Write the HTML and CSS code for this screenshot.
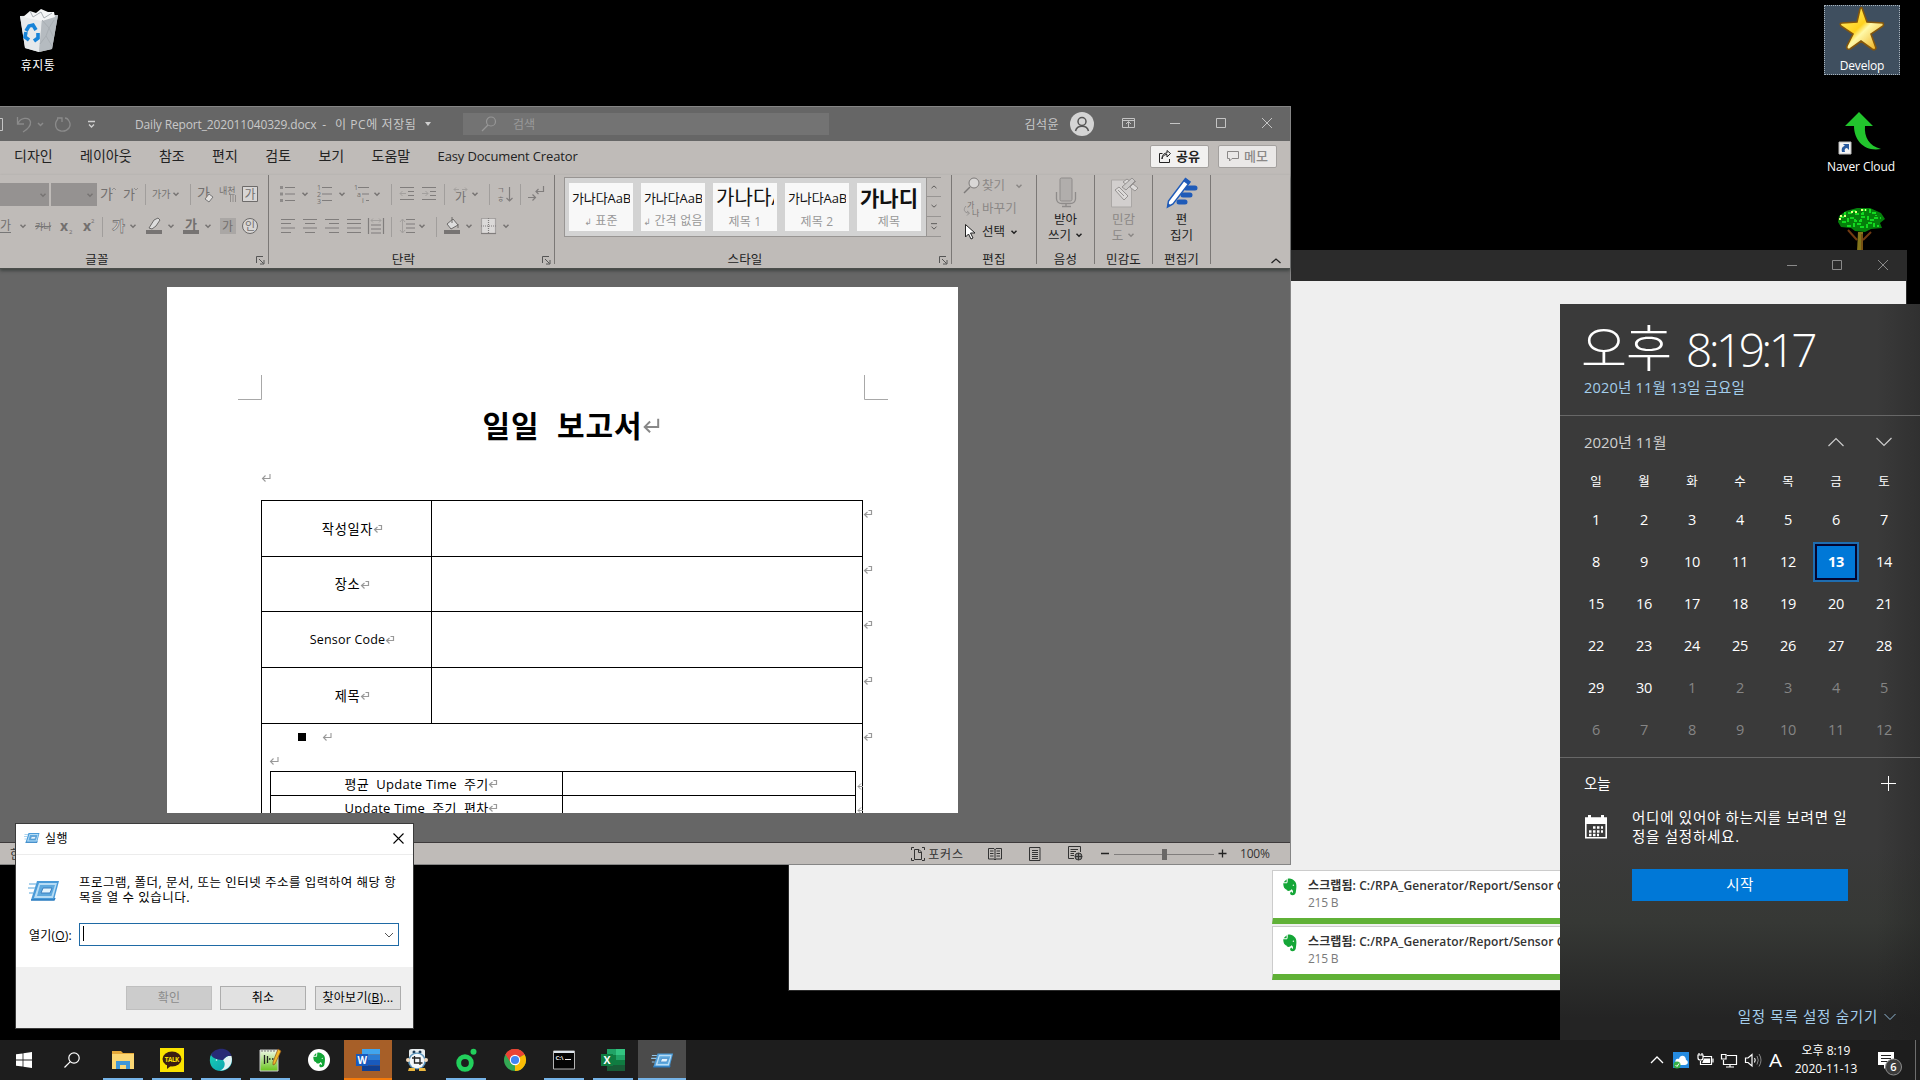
FILE: index.html
```html
<!DOCTYPE html>
<html lang="ko">
<head>
<meta charset="utf-8">
<title>Desktop</title>
<link rel="stylesheet" href="styles.css">
</head>
<body>
<svg class="defs" width="0" height="0">
  <defs>
    <symbol id="chev" viewBox="0 0 8 8"><path d="M1.500 2.800L4 5.200L6.500 2.800" fill="none" stroke="currentColor" stroke-width="1.500"/></symbol>
    <symbol id="launch" viewBox="0 0 9 9"><path d="M.5 7V.5H7M3 3L7.500 7.500M8 4V8H4" fill="none" stroke="currentColor"/></symbol>
    <symbol id="ret" viewBox="0 0 10 10"><path d="M9 1v4.500H2M4.500 2.500L1.500 5.500L4.500 8.500" fill="none" stroke="currentColor" stroke-width="1.100"/></symbol>
    <symbol id="retc" viewBox="0 0 10 10"><path d="M5.500 1.500H8.500V5.500H2M4.500 3L1.500 5.500L4.500 8.500" fill="none" stroke="currentColor" stroke-width="1.200"/></symbol>
    <symbol id="runicon" viewBox="0 0 32 24">
      <path d="M9 2H31L26 21H3Z" fill="#4a9bd8"/><path d="M11 4H29L25 19H6Z" fill="#b6dcf5"/>
      <path d="M12 6H27L23.500 17H9Z" fill="#5ea9de"/><path d="M15 9H24L22 14H13Z" fill="#e4f4fd" stroke="#3a80c0"/>
      <path d="M1 5H8M0 9H7M1 14H5" stroke="#8fc4e8" stroke-width="1.500"/>
      <path d="M3 21H26L27 19" fill="none" stroke="#2b7cc0" stroke-width="1.500"/>
    </symbol>
    <symbol id="elephant" viewBox="0 0 20 24">
      <path d="M7 1C11 0 14 2 16 4C19 6 19 12 18 17C18 21 16 23 13 23C10 23 9 19 12 18L13 20C15 19 14 16 12 15C10 18 6 18 5 15C3 15 1 12 1 7H6C7 6 7 4 7 1Z" fill="#14a637"/>
      <path d="M5.500 1.500V5.500H1.500Z" fill="#14a637"/><circle cx="14.500" cy="9.500" r="1" fill="#e8f7ea"/>
    </symbol>
    <linearGradient id="gold" x1="0" y1="0" x2="1" y2="1"><stop offset="0" stop-color="#fff27a"/><stop offset=".45" stop-color="#ffd21e"/><stop offset=".55" stop-color="#fff9a8"/><stop offset="1" stop-color="#eba000"/></linearGradient>
    <linearGradient id="teal" x1="0" y1="0" x2="1" y2="1"><stop offset="0" stop-color="#19d3b5"/><stop offset="1" stop-color="#0b9bb0"/></linearGradient>
    <linearGradient id="leaf" x1="0" y1="0" x2="0" y2="1"><stop offset="0" stop-color="#f2f9e8"/><stop offset="1" stop-color="#68c41c"/></linearGradient>
  </defs>
</svg>

<div class="desktop">
  <div class="shortcut trash">
    <svg width="44" height="46" viewBox="0 0 44 46">
      <path d="M4 8L42 7L36 41L23 44L9 40Z" fill="#cdd2d6"/><path d="M4 8L26 11L23 44L9 40Z" fill="#e6e9eb"/><path d="M26 11L42 7L36 41L23 44Z" fill="#b5bbc0"/>
      <path d="M7 9L14 3L20 5L25 1L32 4L38 4L39 9L26 13Z" fill="#f4f5f6"/><path d="M14 3L17 9L25 4L28 10L36 5M26 12L33 20L30 28L36 38M38 12L33 20L37 28M24 36L30 28" fill="none" stroke="#a8aeb3"/>
      <path d="M10 23L13 18L17 17L20 22M22 25L22 30L18 33M13 32L9 29L10 24" fill="none" stroke="#1683d8" stroke-width="3.600"/>
    </svg>
    <span>휴지통</span>
  </div>
  <div class="shortcut develop">
    <svg width="48" height="46" viewBox="0 0 48 46"><path d="M24 2L29 16L45 17Q46 19 45 20L33 28L38 42Q37 45 34 43L23 35L12 43Q8 44 9 40L15 28L3 20Q1 17 4 17L19 16L22 3Q23 1 24 2Z" fill="url(#gold)" stroke="#84560c" stroke-width="1.600"/></svg>
    <span>Develop</span>
  </div>
  <div class="shortcut naver">
    <svg width="48" height="46" viewBox="0 0 48 46"><path d="M24 1L38 15H30C29 26 34 35 46 38C30 41 19 30 19 15H10Z" fill="#22c52d"/><path d="M4 31H16V43H4Z" fill="#f4f4f4" stroke="#bbb"/><path d="M7 41C6 37 8 35 10 35L8 33H14V39L12 37C10 37 9 39 10 41Z" fill="#295a9e"/></svg>
    <span>Naver Cloud</span>
  </div>
  <div class="shortcut tree">
    <svg width="48" height="44" viewBox="0 0 48 44">
      <path d="M11 22L20 32M34 24L26 32" stroke="#713a12" stroke-width="2"/><path d="M21 24H26V44H20Z" fill="#84751a"/><path d="M25 26V44" stroke="#6b2f0c"/>
      <path d="M9 3L20 0H33L44 5L48 11L43 15L45 20L34 21L28 24L18 23L14 20L4 19L1 14L2 8Z" fill="#057f0b"/>
      <path d="M3 9H8V5H14V3H19V6H26V2H33V5H39V8M5 14H11V10H18V13H24V9H31V12H38V10H44M10 18H17V16H24V19H30V15H37V18H42" fill="none" stroke="#13da20" stroke-width="2" stroke-dasharray="4 2"/>
      <path d="M3 12V8H9M14 4H20M24 2H29" fill="none" stroke="#e4ff83" stroke-width="2" stroke-dasharray="2 2"/>
    </svg>
  </div>

  <section class="backwin">
    <header><svg width="140" height="30" viewBox="1766 250 140 30"><g fill="none" stroke="#8a8a8a"><path d="M1787 265.500H1797M1832.500 260.500H1841.500V269.500H1832.500ZM1878 260L1888 270M1888 260L1878 270"/></g></svg></header>
    <div class="toasts">
      <div class="toast"><svg width="16" height="18"><use href="#elephant"/></svg><div><b>스크랩됨: C:/RPA_Generator/Report/Sensor Code</b><span>215 B</span></div></div>
      <div class="toast"><svg width="16" height="18"><use href="#elephant"/></svg><div><b>스크랩됨: C:/RPA_Generator/Report/Sensor Code</b><span>215 B</span></div></div>
    </div>
  </section>

  <section class="word">
    <header class="titlebar">
      <svg width="135" height="34" viewBox="0 107 135 34" fill="none">
        <path d="M0 118.500H2.500V130.500H0" stroke="#c4c4c4"/>
        <g stroke="#8b8b8b" stroke-width="1.300"><path d="M17.500 117V124H24M18 123.500C20 118 29 116 30.500 122C31 126 28 129 23 132"/><path d="M58 119C54 123 55 130 61 131C68 132 72 126 69 121C68 119 66 118 65 118M57 118H62V122"/></g>
        <path d="M38 123L40.500 125.500L43 123" stroke="#8b8b8b" stroke-width="1.500"/><path d="M88 121.500H95M89 124.500L91.500 127L94 124.500" stroke="#d0d0d0" stroke-width="1.300"/>
      </svg>
      <span class="docname">Daily Report_202011040329.docx&nbsp; -&nbsp; <span>이 PC에 저장됨</span></span>
      <svg class="tri" width="6" height="4"><path d="M0 0H6L3 4Z" fill="#d0d0d0"/></svg>
      <div class="search"><svg width="16" height="16" viewBox="0 0 16 16" fill="none" stroke="#979797" stroke-width="1.200"><circle cx="10" cy="5.500" r="4.500"/><path d="M7 9L1 15"/></svg><span>검색</span></div>
      <div class="account"><span>김석윤</span>
        <svg width="24" height="24" viewBox="0 0 24 24"><circle cx="12" cy="12" r="12" fill="#d4d4d4"/><g fill="none" stroke="#555" stroke-width="1.500"><circle cx="12" cy="9.500" r="4"/><path d="M5.500 19C7 12.500 17 12.500 18.500 19"/></g></svg>
      </div>
      <svg width="180" height="34" viewBox="1110 107 180 34"><g fill="none" stroke="#c4c4c4"><path d="M1122.500 118.500H1134.500V127.500H1122.500ZM1123 120.500H1134M1128.500 127V122M1126 124L1128.500 121.500L1131 124M1170 123.500H1180M1216.500 118.500H1225.500V127.500H1216.500ZM1262 118L1272 128M1272 118L1262 128"/></g></svg>
    </header>
    <nav class="tabs">
      <span>디자인</span><span>레이아웃</span><span>참조</span><span>편지</span><span>검토</span><span>보기</span><span>도움말</span><span class="edc">Easy Document Creator</span>
      <div class="tabbtns">
        <div class="tbtn share"><svg width="12" height="13" viewBox="0 0 12 13" fill="none" stroke="#222"><path d="M3.500 3.500H.5V12.500H10.500V9M3 9C3.500 6 5 4.500 8 4.500V7L11.500 3.500L8 .5V3C5 3 3 5 3 9Z"/></svg>공유</div>
        <div class="tbtn memo"><svg width="12" height="12" viewBox="0 0 12 12" fill="none" stroke="#8b8887"><path d="M.5 1.500H11.500V8.500H5L2.500 11V8.500H.5Z"/></svg>메모</div>
      </div>
    </nav>
    <div class="ribbon">
      <div class="grp g-font">
        <svg class="tools" width="268" height="72" viewBox="0 175 268 72">
          <g fill="#959291"><path d="M0 183H49V206H0ZM51 183H97V206H51Z"/></g>
          <g stroke="#a19e9c"><path d="M145.500 184V205M190.500 184V205M102.500 217V237"/></g>
          <g class="gl"><text x="100" y="199" font-size="14">가</text><text x="123" y="199" font-size="13">가</text><text x="152" y="198" font-size="10">가가</text><text x="197" y="198" font-size="14">가</text><text x="219" y="194" font-size="9">내천</text></g>
          <g fill="none" stroke="#918e8c"><path d="M112 190L114 188L116 190M134 188L136 190L138 188M230.500 195V202M233 195V202M235.500 195V202"/></g>
          <path d="M205 199L209 194L213 197L209 202Z" fill="#e3e1e0" stroke="#777"/>
          <path d="M242.500 186.500H257.500V201.500H242.500Z" fill="#d8d6d5" stroke="#6c6a69"/><text class="gl" x="244.500" y="198.500" font-size="12">가</text>
          <g class="gl"><text x="0" y="230" font-size="12">가</text><text x="35" y="230" font-size="9">캬나</text><text x="60" y="231" font-size="14" font-weight="700">x</text><text x="69" y="234" font-size="6">2</text><text x="83" y="231" font-size="14" font-weight="700">x</text><text x="91" y="223" font-size="6">2</text></g>
          <path d="M0 232.500H11M35 226.500H51" stroke="#777"/>
          <text x="112" y="231" font-size="14" font-weight="700" fill="#e6e4e3" stroke="#7c7a79" stroke-width=".8">가</text>
          <path d="M149 228L154 220L158 218L160 220L156 226L152 229Z" fill="#ddd" stroke="#6c6a69"/><path d="M146 230H162V234H146ZM183 230H199V234H183Z" fill="#777473"/>
          <text class="gl" x="185" y="229" font-size="13" font-weight="700">가</text>
          <path d="M220 218H236V234H220Z" fill="#aaa7a5"/><text class="gl" x="222" y="230.500" font-size="12">가</text>
          <circle cx="250" cy="226" r="7.500" fill="#d8d6d5" stroke="#6c6a69"/><text class="gl" x="245" y="230" font-size="11">인</text>
          <g color="#777473"><use href="#chev" x="39" y="191" width="8" height="8"/><use href="#chev" x="86" y="191" width="8" height="8"/><use href="#chev" x="172" y="190" width="8" height="8"/><use href="#chev" x="19" y="222" width="8" height="8"/><use href="#chev" x="129" y="222" width="8" height="8"/><use href="#chev" x="167" y="222" width="8" height="8"/><use href="#chev" x="204" y="222" width="8" height="8"/></g>
        </svg>
        <div class="cap"><span>글꼴</span><svg width="9" height="9"><use href="#launch"/></svg></div>
      </div>
      <div class="grp g-para">
        <svg class="tools" width="285" height="72" viewBox="269 175 285 72">
          <g stroke="#a19e9c"><path d="M391.500 184V205M444.500 184V205M489.500 184V205M520.500 184V205M391.500 217V237M436.500 217V237"/></g>
          <g fill="none" stroke="#807d7c" stroke-width="1.200">
            <path d="M285 187.500H295M285 194H295M285 200.500H295M322 187.500H332M322 194H332M322 200.500H332M358 187.500H369M362 194H369M366 200.500H369"/>
            <path d="M400 187.500H414M408 191.500H414M408 195.500H414M400 199.500H414M422 187.500H436M430 191.500H436M430 195.500H436M422 199.500H436"/>
            <path d="M281 219.500H295M281 223.500H291M281 228H295M281 232.500H291M303 219.500H317M305 223.500H315M303 228H317M305 232.500H315M325 219.500H339M329 223.500H339M325 228H339M329 232.500H339M347 219.500H361M347 223.500H361M347 228H361M347 232.500H361"/>
            <path d="M368.500 218V234M383.500 218V234M371 225H381M371 229H381M371 233H381M406 219.500H415M406 224H415M406 228H415M406 232.500H415"/>
            <path d="M509.500 187V201M506.500 198L509.500 201L512.500 198M543.500 186V191.500H536M538.500 189L536 191.500L538.500 194M528 197.500H535M532.500 194.500L535.500 197.500L532.500 200.500"/>
            <path d="M481.500 218.500H495.500V233.500H481.500Z" fill="#dbd9d8" stroke-dasharray="1 1"/><path d="M488.500 218V233M481 226H496" stroke-dasharray="1 1"/><path d="M481 233.500H496"/>
          </g>
          <g fill="none" stroke="#a3a09e"><path d="M406 193.500H400M402.500 191L400 193.500L402.500 196M422 193.500H428M425.500 191L428 193.500L425.500 196M371 220.500H381M373 218.500L371 220.500L373 222.500M379 218.500L381 220.500L379 222.500M402.500 219V233M400 222L402.500 219L405 222M400 230L402.500 233L405 230M454 189.500H459M456 187.500L454 189.500L456 191.500M462 189.500H467M465 187.500L467 189.500L465 191.500"/></g>
          <g fill="#8e8b8a"><path d="M280 186H283V189H280ZM280 192.500H283V195.500H280ZM280 199H283V202H280Z"/></g>
          <g class="gl" font-size="7"><text x="317" y="190">1</text><text x="317" y="197">2</text><text x="317" y="204">3</text><text x="354" y="190">1</text><text x="357" y="197">a</text><text x="362" y="203">i</text></g>
          <g class="gl"><text x="455" y="202" font-size="12">가</text><text x="497" y="193" font-size="8">ㄱ</text><text x="497" y="202" font-size="8">ㅎ</text></g>
          <path d="M447 224L453 219L458 225L451 229Z" fill="#ddd" stroke="#6c6a69"/><path d="M452 223V217M458 224V228" stroke="#6c6a69"/><path d="M444 230H460V234H444Z" fill="#777473"/>
          <g color="#777473"><use href="#chev" x="301" y="190" width="8" height="8"/><use href="#chev" x="338" y="190" width="8" height="8"/><use href="#chev" x="373" y="190" width="8" height="8"/><use href="#chev" x="471" y="190" width="8" height="8"/><use href="#chev" x="418" y="222" width="8" height="8"/><use href="#chev" x="465" y="222" width="8" height="8"/><use href="#chev" x="502" y="222" width="8" height="8"/></g>
        </svg>
        <div class="cap"><span>단락</span><svg width="9" height="9"><use href="#launch"/></svg></div>
      </div>
      <div class="grp g-style">
        <div class="gallery">
          <div class="sty"><p>가나다AaB</p><span><i>↲</i> 표준</span></div>
          <div class="sty"><p>가나다AaB</p><span><i>↲</i> 간격 없음</span></div>
          <div class="sty h1"><p>가나다A</p><span>제목 1</span></div>
          <div class="sty"><p>가나다AaB</p><span>제목 2</span></div>
          <div class="sty ttl"><p>가나디</p><span>제목</span></div>
          <div class="gscroll"><svg viewBox="0 0 8 8" width="8" height="8"><path d="M1.500 5L4 2.800L6.500 5" fill="none" stroke="#5e5c5b"/></svg><svg width="8" height="8" viewBox="0 0 8 8"><path d="M1.500 2.800L4 5L6.500 2.800" fill="none" stroke="#5e5c5b"/></svg><svg width="8" height="8" viewBox="0 0 8 8"><path d="M1 1H7M1.500 4L4 6.500L6.500 4" fill="none" stroke="#5e5c5b"/></svg></div>
        </div>
        <div class="cap"><span>스타일</span><svg width="9" height="9"><use href="#launch"/></svg></div>
      </div>
      <div class="grp g-edit">
        <div class="editrows">
          <div class="dim"><svg width="17" height="17" viewBox="0 0 17 17"><circle cx="11" cy="6" r="5" fill="#d9d7d6" stroke="#7d7a79"/><path d="M7 10L1 16" stroke="#7d7a79" stroke-width="1.500"/></svg>찾기<svg class="c far" width="8" height="8"><use href="#chev"/></svg></div>
          <div class="dim"><svg width="17" height="17" viewBox="0 0 17 17"><text class="gl" x="4" y="8" font-size="8">가</text><text class="gl" x="9" y="16" font-size="8">나</text><path d="M3 6C0 9 1 13 6 13M4 11L6.500 13L4 15.500" fill="none" stroke="#969392"/></svg>바꾸기</div>
          <div><svg width="17" height="17" viewBox="0 0 17 17"><path d="M2.500 1.500V14L5.500 11L8 16L10 15L7.500 10H12Z" fill="#fff" stroke="#222"/></svg>선택<svg class="c" width="8" height="8"><use href="#chev"/></svg></div>
        </div>
        <div class="cap"><span>편집</span></div>
      </div>
      <div class="grp g-big g-voice">
        <svg width="22" height="32" viewBox="0 0 22 32"><rect x="5" y="1" width="12" height="23" rx="1.500" fill="#b1aeac" stroke="#8e8b8a"/><path d="M1.500 15V22Q2 26.500 7 26.500H15Q20 26.500 20.500 22V15M11 27V30M7 29.500H16" fill="none" stroke="#8e8b8a" stroke-width="1.300"/></svg>
        <p>받아<br>쓰기<svg width="8" height="8"><use href="#chev"/></svg></p>
        <div class="cap"><span>음성</span></div>
      </div>
      <div class="grp g-big g-sens dim">
        <svg width="28" height="32" viewBox="0 0 28 32"><path d="M1.500 3H21.500V30H1.500Z" fill="#d2cfce" stroke="#aaa7a5"/><path d="M5 13L9 10L18 19L14 23ZM8 13L14 19M13 5L17 2L28 11L25 14Z" fill="#dcdad9" stroke="#969392"/><path d="M12 10L22 1L25 4L16 13ZM20 10L26 4" fill="#cbc9c8" stroke="#969392"/></svg>
        <p>민감<br>도<svg width="8" height="8"><use href="#chev"/></svg></p>
        <div class="cap"><span>민감도</span></div>
      </div>
      <div class="grp g-big g-pen">
        <svg width="32" height="32" viewBox="0 0 32 32"><path d="M20 11H29M17 18H24M13 25H19" stroke="#1f5bb8" stroke-width="5" stroke-linecap="round"/><path d="M19.500 1.500L24 5L7 27L1.500 30L2.500 24Z" fill="#fff" stroke="#1f5bb8" stroke-width="1.500"/><path d="M19.500 1L24.500 5L22.500 8L17 4ZM2 26L5 28.500L1 30Z" fill="#1f5bb8"/></svg>
        <p>편<br>집기</p>
        <div class="cap"><span>편집기</span></div>
      </div>
      <svg class="collapse" width="10" height="6" viewBox="0 0 10 6"><path d="M.5 5L5 1L9.500 5" fill="none" stroke="#222" stroke-width="1.300"/></svg>
    </div>
    <div class="canvas">
      <article class="page">
        <div class="corners"><svg width="24" height="25"><path d="M0 24.500H23.500V0" fill="none" stroke="#a8a8a8"/></svg><svg width="24" height="25"><path d="M.5 0V24.500H24" fill="none" stroke="#a8a8a8"/></svg></div>
        <h1>일일&nbsp; 보고서<svg width="18" height="18"><use href="#ret"/></svg></h1>
        <div class="para"><svg width="10" height="10"><use href="#ret"/></svg></div>
        <div class="form">
          <div class="row"><div class="k">작성일자<svg width="10" height="10"><use href="#retc"/></svg></div><div class="v"></div><svg class="end" width="10" height="10"><use href="#retc"/></svg></div>
          <div class="row r2"><div class="k">장소<svg width="10" height="10"><use href="#retc"/></svg></div><div class="v"></div><svg class="end" width="10" height="10"><use href="#retc"/></svg></div>
          <div class="row"><div class="k latin">Sensor Code<svg width="10" height="10"><use href="#retc"/></svg></div><div class="v"></div><svg class="end" width="10" height="10"><use href="#retc"/></svg></div>
          <div class="row"><div class="k">제목<svg width="10" height="10"><use href="#retc"/></svg></div><div class="v"></div><svg class="end" width="10" height="10"><use href="#retc"/></svg></div>
          <div class="rest">
            <svg class="end" width="10" height="10"><use href="#retc"/></svg>
            <div class="bullet"><i></i><svg width="10" height="10"><use href="#ret"/></svg></div>
            <div class="blank"><svg width="10" height="10"><use href="#ret"/></svg></div>
            <div class="inner">
              <div class="irow"><div>평균&nbsp; Update Time&nbsp; 주기<svg width="10" height="10"><use href="#retc"/></svg></div><div></div><svg class="iend" width="6" height="10" viewBox="0 0 6 10"><path d="M1 5.500H6M4 2.500L1 5.500L4 8.500" fill="none" stroke="#999"/></svg></div>
              <div class="irow"><div>Update Time&nbsp; 주기&nbsp; 편차<svg width="10" height="10"><use href="#retc"/></svg></div><div></div><svg class="iend" width="6" height="10" viewBox="0 0 6 10"><path d="M1 5.500H6M4 2.500L1 5.500L4 8.500" fill="none" stroke="#999"/></svg></div>
            </div>
          </div>
        </div>
      </article>
    </div>
    <footer class="status">
      <span class="lang">한국어</span>
      <div class="views">
        <svg width="14" height="14" viewBox="0 0 14 14" fill="none" stroke="#333"><path d="M3 .5H.5V3M.5 11V13.500H3M11 13.500H13.500V11M11 .5H13.500V3M3.500 2.500H8L10.500 5V12.500H3.500ZM7.500 3V5.500H10"/></svg><span class="focus">포커스</span>
        <svg class="v1" width="14" height="14" viewBox="0 0 14 14" fill="none" stroke="#333"><path d="M.5 1.500H6L7 2.500L8 1.500H13.500V12H8L7 13L6 12H.5ZM7 2V13M2 4H5.500M2 6.500H5.500M2 9H5.500M8.500 4H12M8.500 6.500H12M8.500 9H12"/></svg>
        <svg class="v2" width="12" height="14" viewBox="0 0 12 14" fill="none" stroke="#333"><path d="M.5 .5H11V13.500H.5ZM3 3.500H9M3 5.500H9M3 7.500H9M3 9.500H9M3 11.500H9"/></svg>
        <svg class="v3" width="15" height="15" viewBox="0 0 15 15" fill="none" stroke="#333"><path d="M6 12.500H.5V.5H12.500V6M2.500 3.500H10M2.500 5.500H8M2.500 7.500H6M2.500 9.500H6"/><circle cx="10.500" cy="10.500" r="3.500" fill="#888"/><path d="M7 10.500H14M10.500 7V14"/></svg>
        <svg class="zoom" width="128" height="20" viewBox="1100 843 128 20"><path d="M1101 852.500H1109M1218.500 852.500H1226.500M1222.500 848.500V856.500" stroke="#222" stroke-width="1.300"/><path d="M1114 853.500H1214" stroke="#807d7c"/><path d="M1162 848H1167V859H1162Z" fill="#6a6867"/></svg>
        <span class="pct">100%</span>
      </div>
    </footer>
  </section>

  <section class="run">
    <header><svg width="16" height="12"><use href="#runicon"/></svg><span>실행</span><svg class="x" width="11" height="11" viewBox="0 0 11 11"><path d="M.5 .5L10.500 10.500M10.500 .5L.5 10.500" stroke="#000" stroke-width="1.100"/></svg></header>
    <div class="runbody">
      <div class="msg"><svg width="32" height="24"><use href="#runicon"/></svg><p>프로그램, 폴더, 문서, 또는 인터넷 주소를 입력하여 해당 항<br>목을 열 수 있습니다.</p></div>
      <div class="open"><label>열기(<u>O</u>):</label><div class="combo"><i></i><svg width="10" height="6" viewBox="0 0 10 6"><path d="M1 1L5 5L9 1" fill="none" stroke="#555"/></svg></div></div>
    </div>
    <footer><div class="btn off">확인</div><div class="btn">취소</div><div class="btn last">찾아보기(<u>B</u>)...</div></footer>
  </section>

  <aside class="clockpanel">
    <div class="top"><div class="time">오후<span>8:19:17</span></div><div class="date">2020년 11월 13일 금요일</div></div>
    <div class="cal">
      <div class="month"><span>2020년 11월</span><svg width="64" height="12" viewBox="0 0 64 12" fill="none" stroke="#ccc" stroke-width="1.200"><path d="M.5 10L8 2.500L15.500 10M48.500 2L56 9.500L63.500 2"/></svg></div>
      <div class="wk"><span>일</span><span>월</span><span>화</span><span>수</span><span>목</span><span>금</span><span>토</span></div>
      <div class="days">
        <span>1</span><span>2</span><span>3</span><span>4</span><span>5</span><span>6</span><span>7</span>
        <span>8</span><span>9</span><span>10</span><span>11</span><span>12</span><span class="today"><b>13</b></span><span>14</span>
        <span>15</span><span>16</span><span>17</span><span>18</span><span>19</span><span>20</span><span>21</span>
        <span>22</span><span>23</span><span>24</span><span>25</span><span>26</span><span>27</span><span>28</span>
        <span>29</span><span>30</span><span class="o">1</span><span class="o">2</span><span class="o">3</span><span class="o">4</span><span class="o">5</span>
        <span class="o">6</span><span class="o">7</span><span class="o">8</span><span class="o">9</span><span class="o">10</span><span class="o">11</span><span class="o">12</span>
      </div>
    </div>
    <div class="agenda">
      <div class="ah"><span>오늘</span><svg width="15" height="15"><path d="M0 7.500H15M7.500 0V15" stroke="#fff"/></svg></div>
      <div class="ab"><svg width="22" height="25" viewBox="0 0 22 25"><path d="M.8 4H21.200V23.800H.8Z" fill="none" stroke="#fff" stroke-width="1.600"/><path d="M1 4H21V10H1ZM3 1H6V5H3ZM16 1H19V5H16Z" fill="#fff"/><path d="M8 13.500H18M4 17.500H18M4 21H14" stroke="#fff" stroke-width="2.500" stroke-dasharray="2.500 1.500"/></svg><p>어디에 있어야 하는지를 보려면 일<br>정을 설정하세요.</p></div>
      <div class="startbtn">시작</div>
      <div class="hide">일정 목록 설정 숨기기<svg width="12" height="8" viewBox="0 0 12 8"><path d="M.5 1L6 6.500L11.500 1" fill="none" stroke="#8fb6d2"/></svg></div>
    </div>
  </aside>

  <div class="taskbar">
    <div class="ti"><svg width="16" height="16" viewBox="0 0 16 16"><path d="M0 2.300L6.600 1.400V7.600H0ZM7.400 1.300L16 0V7.600H7.400ZM0 8.400H6.600V14.600L0 13.700ZM7.400 8.400H16V16L7.400 14.700Z" fill="#fff"/></svg></div>
    <div class="ti find"><svg width="16" height="16" viewBox="0 0 16 16" fill="none" stroke="#fff" stroke-width="1.200"><circle cx="10" cy="6" r="5.200"/><path d="M6.300 9.700L.5 15.500"/></svg></div>
    <div class="ti on exp"><svg width="22" height="18" viewBox="0 0 22 18"><path d="M0 0H9L11 2H22V18H0Z" fill="#e5a93a"/><path d="M0 3H22V18H0Z" fill="#fbd774"/><path d="M4 18V10H18V18H14V14H8V18Z" fill="#3f97d8"/></svg></div>
    <div class="ti on"><svg width="24" height="24" viewBox="0 0 24 24"><path d="M0 0H24V24H0Z" fill="#fbe300"/><ellipse cx="12" cy="11" rx="9.500" ry="7.500" fill="#3a1d12"/><path d="M7 16L7 21L12 17Z" fill="#3a1d12"/><text x="4.800" y="13.500" font-size="6.300" font-weight="700" fill="#fbe300" textLength="14.500">TALK</text></svg></div>
    <div class="ti on"><svg width="24" height="24" viewBox="0 0 24 24"><path d="M1 10C2 4 7 2 12 5L23 10C24 18 18 23 12 23C4 23 0 17 1 10Z" fill="url(#teal)"/><path d="M11 22.500C16 21 17 15 14 12C16 9 20 7 22.500 8C24.500 16 19 23 11 22.500Z" fill="#e3f2f3"/><path d="M2 7C4 2 10 0 15 1C19 2 22 5 22.500 8C20 7 17 8 14 12C10 12 4 11 2 7Z" fill="#282a76"/><circle cx="7.500" cy="12" r=".8" fill="#fff"/></svg></div>
    <div class="ti on"><svg width="24" height="24" viewBox="0 0 24 24"><path d="M2 2H20V23H2Z" fill="url(#leaf)" stroke="#c9c9c9"/><path d="M4 1V4M7 1V4M10 1V4M13 1V4M16 1V4" stroke="#777"/><path d="M6.500 7V16M9.500 8V15M11 11H12.500M14 11H15.500" stroke="#222" stroke-width="1.300"/><path d="M20 1L23 3L17 16L15 17V14Z" fill="#f0b92b" stroke="#8d5018" stroke-width=".7"/></svg></div>
    <div class="ti"><svg width="24" height="24" viewBox="0 0 24 24"><circle cx="12" cy="12" r="11" fill="#fff"/><use href="#elephant" x="5.500" y="4" width="13.500" height="16"/></svg></div>
    <div class="ti wordon"><svg width="24" height="22" viewBox="0 0 24 22"><path d="M6 0H24V5.500H6Z" fill="#41a5ee"/><path d="M6 5.500H24V11H6Z" fill="#2b7cd3"/><path d="M6 11H24V16.500H6Z" fill="#185abd"/><path d="M6 16.500H24V22H6Z" fill="#103f91"/><path d="M0 5H12V17H0Z" fill="#185abd"/><text x="1.500" y="14.500" font-size="10" font-weight="700" fill="#fff" textLength="9.500" lengthAdjust="spacingAndGlyphs">W</text></svg></div>
    <div class="ti"><svg width="22" height="24" viewBox="0 0 22 24"><path d="M3 3Q3 1 6 1H16Q19 1 19 3V11H3Z" fill="#e9eef0"/><circle cx="8" cy="4" r="1.500" fill="#1c3b57"/><circle cx="14" cy="4" r="1.500" fill="#1c3b57"/><ellipse cx="11" cy="13" rx="9" ry="8.500" fill="#5d96bd"/><circle cx="11" cy="13" r="7.300" fill="#f5f8fa"/><circle cx="2" cy="12" r="2" fill="#f1d9bc"/><circle cx="20" cy="12" r="2" fill="#f1d9bc"/><path d="M6 10H14V17M8.500 8V15H16.500" fill="none" stroke="#222" stroke-width="1.300"/><path d="M3 20H9V23H2ZM13 20H19L20 23H13Z" fill="#edb83f"/></svg></div>
    <div class="ti on"><svg width="24" height="24" viewBox="0 0 24 24"><circle cx="11" cy="15" r="6.300" fill="none" stroke="#22cf5c" stroke-width="4.800"/><circle cx="19.500" cy="3.800" r="3" fill="#22cf5c"/></svg></div>
    <div class="ti"><svg width="24" height="24" viewBox="0 0 24 24"><circle cx="12" cy="12" r="11" fill="#34a853"/><path d="M12 12L2.470 6.500A11 11 0 0 1 21.530 6.500Z" fill="#ea4335"/><path d="M12 12L21.530 6.500A11 11 0 0 1 12 23Z" fill="#fbbc05"/><path d="M2.470 6.500L8 15L12 12V7H21.800A11 11 0 0 0 2.470 6.500Z" fill="#ea4335"/><circle cx="12" cy="12" r="5.200" fill="#fff"/><circle cx="12" cy="12" r="4.100" fill="#4285f4"/></svg></div>
    <div class="ti on"><svg width="22" height="20" viewBox="0 0 22 20"><path d="M.5 1H21.500V19H.5Z" fill="#050505" stroke="#b5b5b5"/><path d="M1 1H21V3H1Z" fill="#dde5ec"/><text x="2.500" y="9.500" font-size="6" font-weight="700" fill="#eee">C:\</text><path d="M12 9.500H18" stroke="#eee"/></svg></div>
    <div class="ti on"><svg width="24" height="22" viewBox="0 0 24 22"><path d="M6 0H15V6H6Z" fill="#21a366"/><path d="M15 0H24V6H15Z" fill="#33c481"/><path d="M6 6H15V16H6Z" fill="#107c41"/><path d="M15 6H24V11H15Z" fill="#21a366"/><path d="M15 11H24V16H15Z" fill="#107c41"/><path d="M6 16H24V22H6Z" fill="#185c37"/><path d="M0 5H12V17H0Z" fill="#107c41"/><text x="2.500" y="14.800" font-size="10.500" font-weight="700" fill="#fff">X</text></svg></div>
    <div class="ti act"><svg width="23" height="17"><use href="#runicon"/></svg></div>
    <div class="tray">
      <svg width="140" height="40" viewBox="1645 1040 140 40">
        <path d="M1651 1063L1657 1057L1663 1063" fill="none" stroke="#fff" stroke-width="1.300"/>
        <path d="M1673 1052H1689V1068H1673Z" fill="#258be0"/><path d="M1676 1063C1674 1059 1678 1058 1679 1059C1680 1054 1686 1055 1686 1060C1689 1061 1688 1065 1685 1065H1678Z" fill="#fff"/><circle cx="1677" cy="1065" r="3.500" fill="#36b047"/><path d="M1675.500 1065L1677 1066.500L1679 1063.500" fill="none" stroke="#fff"/>
        <g fill="none" stroke="#fff" stroke-width="1.200"><path d="M1703 1056.500H1711.500V1064.500H1700.500V1061M1698 1055H1703V1058Q1703 1060 1700.500 1060Q1698 1060 1698 1058ZM1699 1053V1055M1702 1053V1055M1713 1058.500V1062.500"/><path d="M1704.500 1059H1709.500V1062.500H1703Z" fill="#fff"/>
        <path d="M1727 1055.500H1736.500V1064.500H1723.500V1060M1721.500 1054.500H1726V1059H1721.500ZM1730 1065V1067M1726 1067H1734"/>
        <path d="M1745.500 1058H1748L1752 1054.500V1066L1748 1062.500H1745.500Z"/><path d="M1754.500 1058Q1756 1060 1754.500 1062.500"/></g><path d="M1757 1056Q1759.500 1060 1757 1064.500M1759 1054Q1763 1060 1759 1066.500" fill="none" stroke="#888"/>
        <text x="1769" y="1067" font-size="18" fill="#fff" textLength="13" lengthAdjust="spacingAndGlyphs">A</text>
      </svg>
      <div class="clk"><span>오후 8:19</span><span>2020-11-13</span></div>
      <svg width="34" height="40" viewBox="1872 1040 34 40"><path d="M1879 1052H1895V1065H1889L1885 1069V1065H1879Z" fill="#fff"/><path d="M1882 1055.500H1892M1882 1058.500H1892M1882 1061.500H1888" stroke="#222"/><circle cx="1894.500" cy="1067" r="8" fill="#3b3b3b" stroke="#8d8d8d"/><text x="1891.300" y="1071.300" font-size="11" font-weight="600" fill="#fff">6</text></svg>
      <i class="peek"></i>
    </div>
  </div>
</div>
</body>
</html>
```
FILE: styles.css
```css
* { box-sizing: border-box; }
body { margin: 0; background: #000; overflow: hidden; font-family: "Open Sans", "Noto Sans CJK KR", sans-serif; }
h1, p { margin: 0; }
svg { display: block; flex: none; }
.defs { position: absolute; }
.desktop { position: relative; width: 1920px; height: 1080px; overflow: hidden; background: #000; white-space: nowrap; }

/* desktop shortcuts */
.shortcut { position: absolute; width: 76px; display: flex; flex-direction: column; align-items: center; color: #fff; font-size: 12px; line-height: 16px; letter-spacing: -.2px; }
.trash { left: 0; top: 8px; letter-spacing: .4px; }
.trash svg { margin-right: 1px; }
.trash span { margin-top: 4px; }
.develop { left: 1824px; top: 5px; height: 70px; background: #3f4f5f; border: 1px dotted #a9b4bd; }
.develop span { margin-top: 6px; }
.naver { left: 1823px; top: 111px; letter-spacing: -.1px; }
.naver svg { margin-right: 4px; }
.naver span { margin-top: 2px; }
.tree { left: 1823px; top: 208px; }

/* window behind */
.backwin { position: absolute; left: 788px; top: 250px; width: 1119px; height: 741px; background: #efefef; border: 1px solid #2b2b2b; border-top: 0; display: flex; flex-direction: column; justify-content: space-between; }
.backwin header { height: 31px; background: #2b2b2b; display: flex; justify-content: flex-end; }
.toasts { display: flex; flex-direction: column; gap: 2px; padding: 0 0 10px 483px; }
.toast { height: 54px; background: #fff; border-top: 1px solid #ccc; border-left: 1px solid #ccc; border-bottom: 6px solid #60b137; display: flex; gap: 10px; padding: 6px 0 0 9px; }
.toast svg { margin-top: 1px; }
.toast div { display: flex; flex-direction: column; font-size: 12px; color: #7a7a7a; line-height: 17px; letter-spacing: -.25px; }
.toast b { font-weight: 600; color: #333; letter-spacing: .1px; }

/* word processor */
.word { position: absolute; left: -1px; top: 106px; width: 1292px; height: 759px; border: 1px solid #858585; background: #666; display: flex; flex-direction: column; }
.titlebar { height: 34px; display: flex; align-items: center; background: #666; color: #c9c9c9; font-size: 12px; flex: none; }
.docname { letter-spacing: -.15px; width: 284px; }
.docname span { letter-spacing: .6px; margin-left: 3px; }
.tri { margin-left: 6px; }
.search { margin-left: 32px; width: 366px; height: 22px; background: #737373; display: flex; align-items: center; gap: 16px; padding-left: 18px; color: #9a9a9a; }
.account { margin-left: auto; display: flex; align-items: center; gap: 11px; margin-right: 16px; letter-spacing: .5px; }
.tabs { height: 34px; background: #bfbbb8; display: flex; align-items: center; gap: 27.400px; padding-left: 14px; font-size: 14px; line-height: 20px; color: #222; flex: none; padding-bottom: 4px; }
.edc { letter-spacing: -.15px; font-size: 13px; }
.tabbtns { margin-left: auto; display: flex; gap: 9px; padding-right: 13px; }
.tbtn { width: 59px; height: 23px; border: 1px solid #a3a09e; border-radius: 2px; background: #f2f1f0; font-size: 13px; display: flex; align-items: center; justify-content: center; gap: 5px; font-weight: 600; }
.memo { color: #8b8887; background: #eae8e7; font-weight: 500; }

.ribbon { position: relative; height: 94px; background: #bfbbb8; display: flex; border-bottom: 1px solid #4b4e4b; box-shadow: 0 2px 3px rgba(50, 55, 52, .7); flex: none; font-size: 13px; color: #222; z-index: 1; }
.grp { position: relative; border-right: 1px solid #7b7876; height: 89px; display: flex; flex-direction: column; justify-content: space-between; }
.g-font { width: 269px; } .g-para { width: 286px; } .g-style { width: 397px; } .g-edit { width: 85px; }
.g-voice { width: 58px; } .g-sens { width: 58px; } .g-pen { width: 58px; }
.gl { fill: #73706f; }
.cap { height: 16px; line-height: 16px; display: flex; justify-content: center; position: relative; font-size: 12.500px; letter-spacing: .2px; margin-bottom: -4px; color: #222; }
.cap svg { position: absolute; right: 3px; top: 4px; color: #555; }
.g-font .cap { padding-right: 74px; }
.g-para .cap { padding-right: 16px; }
.g-style .cap { padding-right: 16px; }
.gallery { margin: 2px 0 0 9px; width: 377px; height: 60px; border: 1px solid #989593; background: #d3d3d3; display: flex; gap: 8px; padding: 5px 0 5px 4px; }
.sty { width: 64px; height: 48px; background: #f8f8f8; display: flex; flex-direction: column; align-items: center; overflow: hidden; color: #111; flex: none; }
.sty p { width: 58px; overflow: hidden; font-size: 13px; line-height: 30px; height: 31px; letter-spacing: -.1px; }
.sty span { font-size: 12px; line-height: 18px; color: #999; letter-spacing: .2px; }
.sty i { font-style: normal; font-size: 9px; font-family: "DejaVu Sans", sans-serif; }
.h1 p { font-size: 20px; letter-spacing: .1px; }
.ttl p { font-size: 21px; font-weight: 700; letter-spacing: 0; }
.gscroll { width: 15px; margin: -5px 0 -5px -3px; border-left: 1px solid #989593; background: #bfbbb8; display: flex; flex-direction: column; color: #5e5c5b; height: 58px; }
.gscroll svg { height: 19.300px; width: 14px; padding: 5px 3px; border-bottom: 1px solid #989593; }
.gscroll svg:last-child { border: 0; }
.dim { color: #8b8886; }
.editrows { padding-left: 11px; margin-top: -1px; }
.editrows div { display: flex; align-items: center; height: 23px; gap: 2px; line-height: 21px; font-size: 12.500px; letter-spacing: .1px; }
.editrows .c { margin-left: 3px; }
.editrows .far { margin-left: 8px; }
.g-big { align-items: center; padding-top: 2px; }
.g-big p { text-align: center; line-height: 16px; font-size: 12.500px; margin-bottom: 5px; }
.g-big p svg { display: inline-block; margin-left: 4px; vertical-align: 1px; }
.collapse { position: absolute; right: 9px; bottom: 4px; }

.canvas { flex: 1; background: #666; overflow: hidden; padding: 18px 0 29px 167px; display: flex; }
.page { width: 791px; background: #fff; overflow: hidden; color: #000; }
.corners { display: flex; justify-content: space-between; padding: 88px 70px 0 71px; }
.page h1 { display: flex; justify-content: center; font-size: 30px; line-height: 40px; padding: 6px 0 0 18px; font-weight: 700; align-items: center; letter-spacing: .9px; }
.page h1 svg { color: #888; }
.page svg { color: #999; }
.para { padding: 27px 0 0 94px; height: 54px; }
.form { margin-left: 94px; width: 602px; border: 1px solid #000; font-size: 13.200px; letter-spacing: .7px; }
.row { position: relative; display: flex; height: 56px; border-bottom: 1px solid #000; }
.r2 { height: 55px; }
.k { width: 170px; border-right: 1px solid #000; display: flex; align-items: center; justify-content: center; padding-left: 12px; line-height: 18px; }
.latin { font-size: 12.500px; letter-spacing: .2px; }
.k svg, .irow div svg { margin-top: 1px; }
.end { position: absolute; right: -11px; top: 8px; }
.rest { position: relative; height: 200px; }
.bullet { display: flex; align-items: center; padding: 8px 0 0 36px; gap: 16px; height: 17px; }
.bullet i { width: 8px; height: 8px; background: #000; }
.blank { padding: 15px 0 0 7px; height: 30px; }
.inner { margin-left: 8px; width: 586px; border: 1px solid #000; height: 100px; font-size: 13px; letter-spacing: .25px; }
.irow { position: relative; display: flex; height: 24px; border-bottom: 1px solid #000; line-height: 18px; }
.irow div { width: 50%; display: flex; align-items: center; justify-content: center; }
.irow div:first-child { border-right: 1px solid #000; padding-left: 10px; }
.iend { position: absolute; right: -8px; top: 9px; }

.status { height: 22px; background: #bfbbb8; border-top: 1px solid #3d3a3b; display: flex; justify-content: space-between; align-items: center; font-size: 12px; color: #333; padding: 0 19px 0 10px; flex: none; }
.views { display: flex; align-items: center; }
.views .focus { margin-left: 3px; letter-spacing: .9px; }
.v1 { margin-left: 24px; } .v2 { margin-left: 27px; } .v3 { margin-left: 27px; }
.zoom { margin-left: 17px; }
.views .pct { margin-left: 12px; letter-spacing: -.2px; width: 31px; }

/* run dialog */
.run { position: absolute; left: 15px; top: 823px; width: 399px; height: 206px; border: 1px solid #3b3b3b; background: #fff; display: flex; flex-direction: column; font-size: 12px; color: #000; }
.run header { height: 31px; border-bottom: 1px solid #ececec; display: flex; align-items: center; padding: 0 9px 2px 8px; gap: 5px; letter-spacing: .5px; }
.x { margin-left: auto; }
.runbody { flex: 1; padding: 20px 13px 0 12px; }
.msg { display: flex; gap: 19px; line-height: 15px; font-size: 12.500px; letter-spacing: .5px; }
.msg svg { margin-top: 4px; }
.open { display: flex; align-items: center; margin-top: 18px; justify-content: space-between; padding-right: 1px; }
.open label { padding-left: 1px; letter-spacing: .2px; }
.combo { width: 320px; height: 23px; border: 1px solid #1f6aa5; display: flex; align-items: center; justify-content: space-between; padding: 0 4px 0 3px; }
.combo i { width: 1px; height: 15px; background: #000; margin-top: -3px; }
.run footer { height: 61px; background: #f0f0f0; display: flex; padding: 19px 12px 0 0; gap: 8px; justify-content: flex-end; }
.btn { width: 86px; height: 24px; border: 1px solid #adadad; background: #e1e1e1; line-height: 21px; text-align: center; letter-spacing: .25px; }
.off { background: #ccc; border-color: #bfbfbf; color: #8b8b8b; }
.last { margin-left: 1px; }

/* clock flyout */
.clockpanel { position: absolute; left: 1560px; top: 304px; width: 360px; height: 736px; background: linear-gradient(90deg, transparent 88%, rgba(30, 30, 30, .35)), linear-gradient(#3a3a3a 0 74%, #363835 84%, #242424 97%); color: #fff; display: flex; flex-direction: column; }
.top { height: 112px; border-bottom: 1px solid #676767; padding: 14px 0 0 24px; }
.time { font-size: 50px; font-weight: 300; line-height: 60px; letter-spacing: -1px; margin-left: -3px; }
.time span { font-size: 46px; letter-spacing: -3.600px; margin-left: 15px; }
.date { font-size: 14.500px; line-height: 18px; color: #a3cdeb; letter-spacing: .2px; }
.cal { height: 342px; border-bottom: 1px solid #676767; }
.month { display: flex; justify-content: space-between; align-items: center; padding: 15px 28px 0 24px; font-size: 15px; line-height: 22px; color: #d0d0d0; letter-spacing: -.05px; }
.wk, .days { display: grid; grid-template-columns: repeat(7, 48px); padding-left: 12px; text-align: center; }
.wk { margin-top: 19px; font-size: 12.500px; line-height: 20px; }
.days { margin-top: 7px; grid-auto-rows: 42px; line-height: 42px; font-size: 14.500px; letter-spacing: -.3px; }
.o { color: #858585; }
.today b { display: block; margin: 1px; width: 46px; height: 40px; border: 2px solid #1f6db0; background: #0078d7; outline: 2px solid #05052e; outline-offset: -4px; line-height: 35px; font-weight: 700; }
.agenda { flex: 1; display: flex; flex-direction: column; font-size: 14.500px; }
.ah { display: flex; justify-content: space-between; align-items: center; padding: 16px 24px 0 24px; line-height: 20px; }
.ah svg { margin-top: -2px; }
.ab { display: flex; padding: 14px 0 0 25px; gap: 25px; line-height: 19px; letter-spacing: .75px; }
.ab svg { margin-top: 6px; }
.startbtn { margin: 23px 0 0 72px; width: 216px; height: 32px; background: #0078d7; text-align: center; line-height: 31px; flex: none; letter-spacing: .5px; }
.hide { margin: auto 24px 12px; display: flex; justify-content: flex-end; align-items: center; gap: 6px; color: #a3cdeb; line-height: 22px; letter-spacing: .75px; }

/* taskbar */
.taskbar { position: absolute; left: 0; top: 1040px; width: 1920px; height: 40px; background: #1d1d1d; display: flex; gap: 1px; }
.ti { width: 48px; height: 40px; display: flex; align-items: center; justify-content: center; position: relative; flex: none; }
.find { margin-left: -1px; }
.exp { margin-left: 2px; }
.on::after { content: ""; position: absolute; left: 4px; right: 4px; bottom: 0; height: 2px; background: #76b4e8; }
.wordon { background: #a75f28; border-bottom: 2px solid #f57b0a; padding-top: 2px; }
.act { background: #4b4b4b; border-bottom: 2px solid #76b4e8; padding-top: 2px; }
.tray { margin-left: auto; display: flex; }
.clk { width: 86px; color: #fff; font-size: 12px; display: flex; flex-direction: column; align-items: center; line-height: 18px; padding: 2px 4px 0 0; letter-spacing: 0; }
.peek { width: 1px; background: #6d6d6d; margin: 0 4px 0 10px; }
```
